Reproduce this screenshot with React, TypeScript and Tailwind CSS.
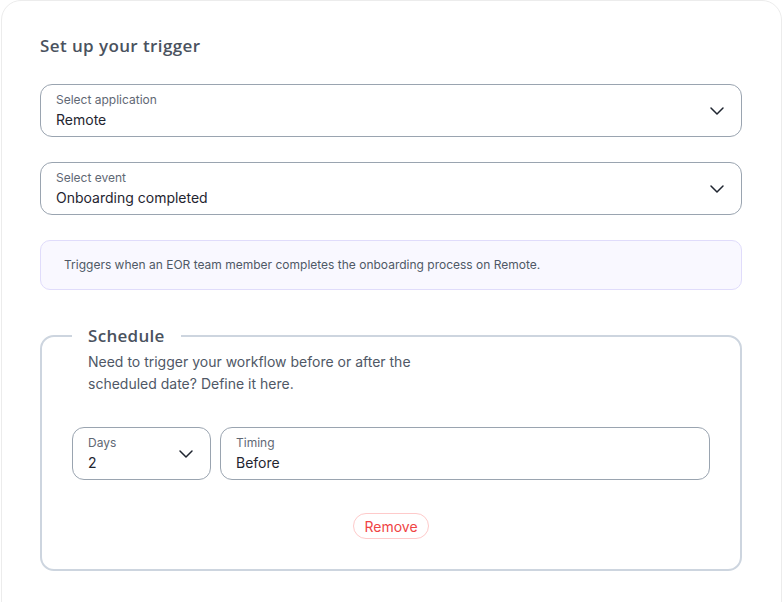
import React from 'react';
import { ChevronDown } from 'lucide-react';

const heading = { fontFamily: '"Open Sans", "Noto Sans", sans-serif' };

interface SelectBoxProps {
  label: string;
  value: string;
  chevron?: boolean;
  className?: string;
}

const SelectBox: React.FC<SelectBoxProps> = ({ label, value, chevron = true, className = '' }) => (
  <div
    className={`h-[53px] border border-[#9aa4b0] rounded-[12px] pl-[15px] pr-[14px] flex items-center bg-white ${className}`}
  >
    <div className="flex-1 pt-[1px]">
      <div className="text-[12px] leading-[16px] text-[#5f6874]">{label}</div>
      <div className="text-[14px] leading-[20px] text-[#1f2530] mt-[2px]">{value}</div>
    </div>
    {chevron && <ChevronDown size={24} strokeWidth={1.5} className="text-[#1f2530] -mr-[2px]" />}
  </div>
);

const App: React.FC = () => {
  return (
    <div className="w-[782px] h-[602px] bg-white overflow-hidden" style={{ fontFamily: 'Inter, "Liberation Sans", sans-serif' }}>
      <div className="ml-[1px] w-[781px] h-[640px] border border-[#ececec] rounded-[20px] bg-white pl-[38px] pr-[39px] pt-[33px]">
        <h2 className="text-[17px] leading-[24px] font-semibold text-[#4a525e] tracking-[0.4px]" style={heading}>
          Set up your trigger
        </h2>

        <div className="mt-[26px] flex flex-col gap-[25px]">
          <SelectBox label="Select application" value="Remote" />
          <SelectBox label="Select event" value="Onboarding completed" />
          <div className="h-[50px] rounded-[10px] border border-[#e0dcfb] bg-[#f9f8ff] pl-[23px] flex items-center">
            <span className="text-[12px] text-[#4f5866]">
              Triggers when an EOR team member completes the onboarding process on Remote.
            </span>
          </div>
        </div>

        <fieldset className="mt-[34px] border-2 border-[#cdd5df] rounded-[14px] px-[30px] pb-[30px]">
          <legend className="px-4 text-[17px] leading-[24px] font-semibold text-[#4a525e] tracking-[0.3px]" style={heading}>
            Schedule
          </legend>
          <p className="ml-4 mt-[3px] w-[340px] text-[14px] leading-[22px] text-[#4f5866]">
            Need to trigger your workflow before or after the scheduled date? Define it here.
          </p>
          <div className="mt-[32px] flex gap-[9px]">
            <SelectBox label="Days" value="2" className="w-[139px]" />
            <SelectBox label="Timing" value="Before" chevron={false} className="flex-1" />
          </div>
          <div className="mt-[33px] flex justify-center">
            <button className="h-[26px] px-[10px] rounded-full border border-[#fecaca] text-[14px] text-[#ef4444] bg-white">
              Remove
            </button>
          </div>
        </fieldset>
      </div>
    </div>
  );
};

export default App;
